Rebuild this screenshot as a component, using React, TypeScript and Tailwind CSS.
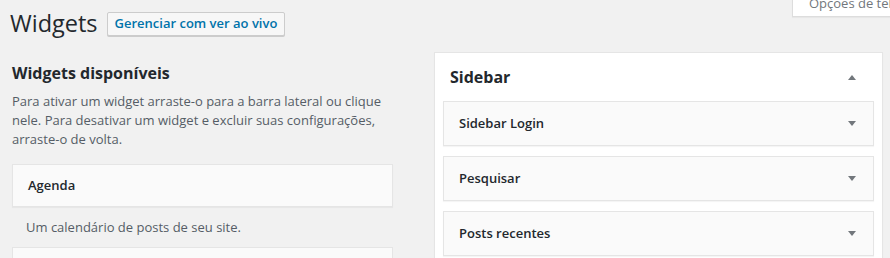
import { ReactNode } from "react";

function Caret({ up = false }: { up?: boolean }) {
  return (
    <svg width="8" height="5" viewBox="0 0 8 5" className="shrink-0">
      {up ? (
        <path d="M0 5 L4 0 L8 5 Z" fill="#72777c" />
      ) : (
        <path d="M0 0 L8 0 L4 5 Z" fill="#72777c" />
      )}
    </svg>
  );
}

function WidgetCard({ title, children }: { title: string; children?: ReactNode }) {
  return (
    <div className="h-[45px] flex items-center justify-between pl-[15px] pr-[17px] bg-[#fafafa] border border-[#e5e5e5] shadow-[0_1px_1px_rgba(0,0,0,0.04)]">
      <span className="text-[13px] font-semibold text-[#23282d]">{title}</span>
      {children}
    </div>
  );
}

export default function App() {
  return (
    <div className="relative min-h-screen overflow-hidden bg-[#f1f1f1] font-['Open_Sans',sans-serif] text-[#23282d]">
      {/* aba de opções de tela */}
      <div className="absolute top-[-6px] left-[792px] pl-4 pr-6 pb-[3px] bg-white border border-[#ddd] border-t-0 shadow-[0_1px_1px_rgba(0,0,0,0.04)]">
        <span className="block whitespace-nowrap text-[13px] leading-[19px] text-[#72777c]">
          Opções de tela
        </span>
      </div>

      <div className="pl-[10px] pt-[9px]">
        <div className="flex items-center gap-[9px]">
          <h1 className="text-[23.5px] leading-[29px] font-normal text-[#23282d]">Widgets</h1>
          <button className="h-[24px] px-[7px] rounded-[2px] border border-[#ccc] bg-[#f7f7f7] text-[13px] font-semibold text-[#0073aa] leading-none shadow-[0_1px_0_#ccc]">
            Gerenciar com ver ao vivo
          </button>
        </div>

        <div className="flex items-start">
          <div className="w-[381px] ml-[2px] pt-[23px]">
            <h2 className="text-[16px] leading-[24px] font-bold text-[#23282d]">
              Widgets disponíveis
            </h2>
            <p className="mt-[7px] text-[13px] leading-[19px] text-[#555d66]">
              Para ativar um widget arraste-o para a barra lateral ou clique nele. Para desativar um widget e excluir suas configurações, arraste-o de volta.
            </p>

            <div className="mt-[15px]">
              <div className="h-[43px] flex items-center px-[15px] bg-[#fafafa] border border-[#e5e5e5] shadow-[0_1px_1px_rgba(0,0,0,0.04)]">
                <span className="text-[13px] font-semibold text-[#23282d]">Agenda</span>
              </div>
              <p className="mt-[11px] pl-[14px] text-[13px] leading-[19px] text-[#555d66]">
                Um calendário de posts de seu site.
              </p>
              <div className="mt-[10px] h-[43px] bg-[#fafafa] border border-[#e5e5e5]" />
            </div>
          </div>

          <div className="w-[449px] ml-[41px] mt-[14px] bg-white border border-[#e5e5e5] shadow-[0_1px_1px_rgba(0,0,0,0.04)] px-[8px] pb-[8px]">
            <div className="h-[48px] flex items-center justify-between pl-[7px] pr-[18px]">
              <h2 className="text-[16px] font-bold text-[#23282d]">Sidebar</h2>
              <Caret up />
            </div>
            <div className="flex flex-col gap-[10px]">
              <WidgetCard title="Sidebar Login">
                <Caret />
              </WidgetCard>
              <WidgetCard title="Pesquisar">
                <Caret />
              </WidgetCard>
              <WidgetCard title="Posts recentes">
                <Caret />
              </WidgetCard>
            </div>
          </div>
        </div>
      </div>
    </div>
  );
}
